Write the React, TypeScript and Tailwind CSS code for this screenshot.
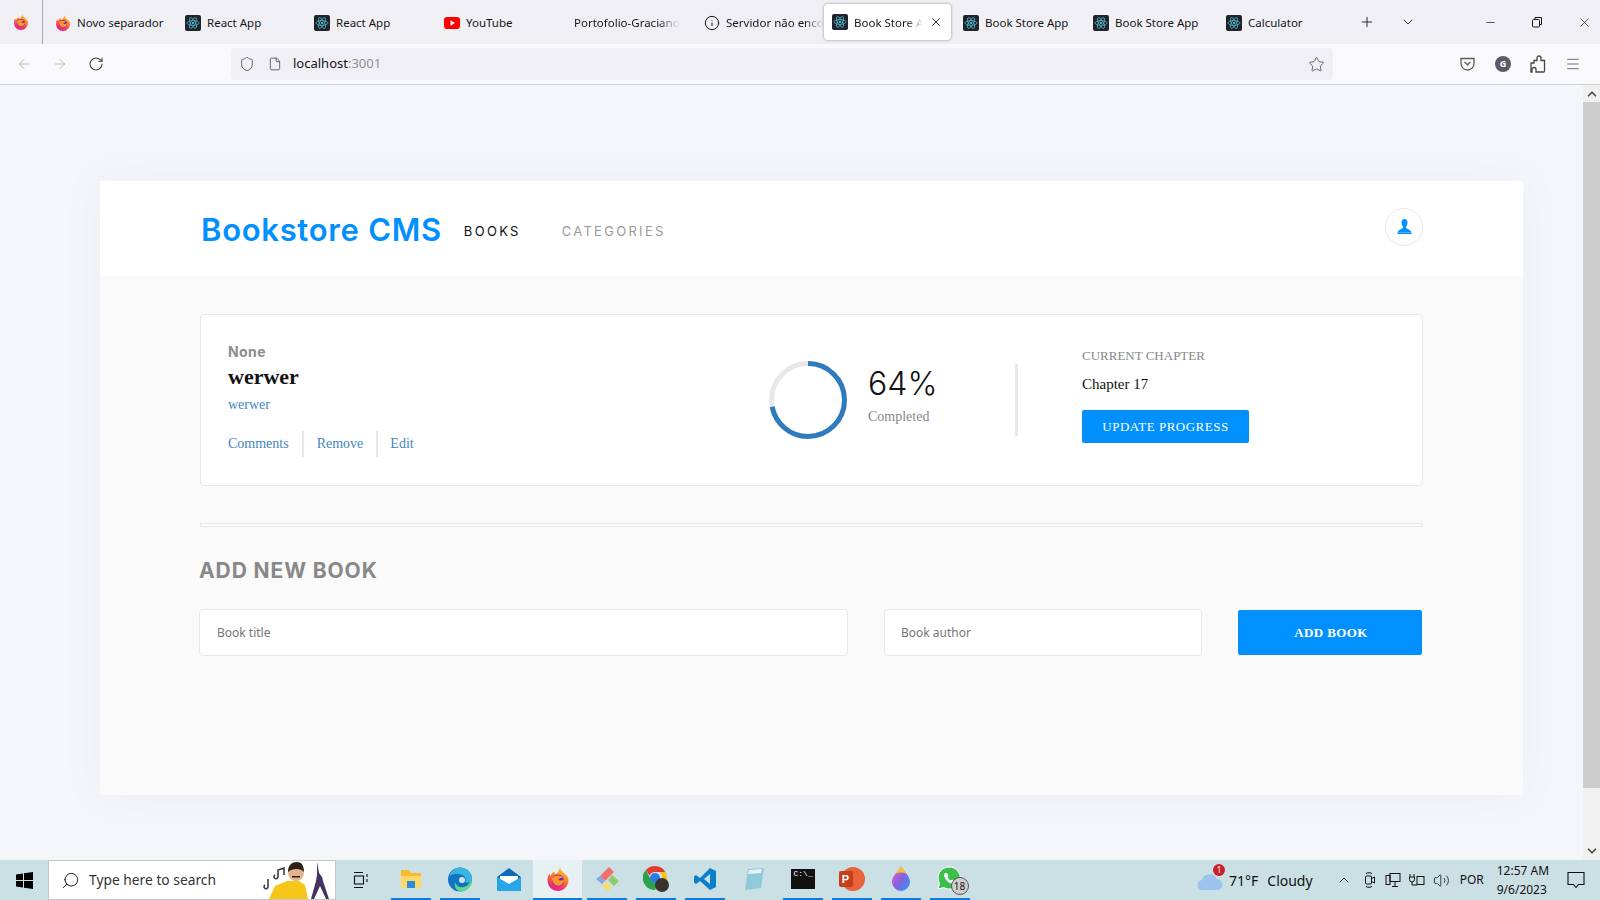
import React from "react";
import {
  ArrowLeft,
  ArrowRight,
  RotateCw,
  Shield,
  File,
  Star,
  ChevronDown,
  ChevronUp,
  Plus,
  X,
  Minus,
  Menu,
  Info,
  Search,
  Volume2,
} from "lucide-react";

const FirefoxIcon = ({ size = 16 }: { size?: number }) => (
  <svg width={size} height={size} viewBox="0 0 32 32" className="shrink-0">
    <defs>
      <linearGradient id="ffBody" x1="0.7" y1="0" x2="0.3" y2="1">
        <stop offset="0" stopColor="#ffd02e" />
        <stop offset="0.45" stopColor="#ff7a2c" />
        <stop offset="0.85" stopColor="#f0257c" />
      </linearGradient>
    </defs>
    <path
      d="M16 32C7 32 2 25 2 17c0-3 1-6 2.500-8 .3 1.500 1 2.500 2 3 .5-3 2.500-5 4.500-6 0 2 1 3 3 3.500C15 7 18 4 19 0c0 3 2 5 4 7 4 3 7 6 7 11 0 7-6 14-14 14z"
      fill="url(#ffBody)"
    />
    <circle cx="16" cy="18" r="8" fill="#6a2bc4" />
    <path d="M8 15c3-4 10-5 15-1-3 0-6 1-6 3 2 2 5 1 7-1 0 6-4 9-8 9-4 0-8-4-8-10z" fill="#ff9326" />
  </svg>
);

const ReactIcon = () => (
  <svg width="16" height="16" viewBox="0 0 16 16" className="shrink-0">
    <rect width="16" height="16" rx="2" fill="#20232a" />
    <g fill="none" stroke="#4fb3c8" strokeWidth="0.8">
      <ellipse cx="8" cy="8" rx="6" ry="2.400" />
      <ellipse cx="8" cy="8" rx="6" ry="2.400" transform="rotate(60 8 8)" />
      <ellipse cx="8" cy="8" rx="6" ry="2.400" transform="rotate(120 8 8)" />
    </g>
    <circle cx="8" cy="8" r="1.200" fill="#4fb3c8" />
  </svg>
);

const YoutubeIcon = () => (
  <svg width="16" height="16" viewBox="0 0 16 16" className="shrink-0">
    <rect y="2" width="16" height="12" rx="3" fill="#f00" />
    <path d="M6.500 5.300v5.400L11 8z" fill="#fff" />
  </svg>
);

type TabProps = {
  width: string;
  icon?: React.ReactNode;
  label: string;
  fade?: boolean;
  pad?: string;
};

const Tab = ({ width, icon, label, fade, pad = "pl-[16px]" }: TabProps) => (
  <div className={`${width} ${pad} flex h-full shrink-0 items-center gap-[6px] overflow-hidden pt-[1px]`}>
    {icon}
    <span
      className={
        fade
          ? "overflow-hidden whitespace-nowrap bg-gradient-to-r from-[#15141a] from-80% to-transparent bg-clip-text text-transparent"
          : "whitespace-nowrap"
      }
    >
      {label}
    </span>
  </div>
);

const BrowserChrome = () => (
  <div className="shrink-0 font-['Noto_Sans',sans-serif] text-[11.5px] text-[#15141a]">
    <div className="flex h-[44px] items-center bg-[#f0f0f4]">
      <div className="flex h-full w-[43px] shrink-0 items-center justify-center border-r border-[#a8a8a8] pb-[1px]">
        <FirefoxIcon />
      </div>
      <Tab width="w-[129px]" pad="pl-[12px]" icon={<FirefoxIcon />} label="Novo separador" />
      <Tab width="w-[129px]" pad="pl-[13px]" icon={<ReactIcon />} label="React App" />
      <Tab width="w-[130px]" pad="pl-[13px]" icon={<ReactIcon />} label="React App" />
      <Tab width="w-[143px]" pad="pl-[13px]" icon={<YoutubeIcon />} label="YouTube" />
      <Tab width="w-[129px]" pad="pl-[0px]" label="Portofolio-Graciano" fade />
      <Tab
        width="w-[121px]"
        pad="pl-[1px]"
        icon={<Info size={16} strokeWidth={1.5} className="shrink-0" />}
        label="Servidor não encontrado"
        fade
      />
      <div className="flex h-[36px] w-[127px] shrink-0 items-center gap-[6px] overflow-hidden rounded-[4px] bg-white pr-[8px] pl-[8px] shadow-[0_0_3px_rgba(0,0,0,0.4)]">
        <ReactIcon />
        <span className="w-[72px] overflow-hidden whitespace-nowrap bg-gradient-to-r from-[#15141a] from-75% to-transparent bg-clip-text pt-[1px] text-transparent">
          Book Store App
        </span>
        <X size={14} strokeWidth={1.5} className="shrink-0" />
      </div>
      <Tab width="w-[130px]" pad="pl-[12px]" icon={<ReactIcon />} label="Book Store App" />
      <Tab width="w-[130px]" pad="pl-[12px]" icon={<ReactIcon />} label="Book Store App" />
      <Tab width="w-[128px]" pad="pl-[15px]" icon={<ReactIcon />} label="Calculator" />
      <Plus size={16} strokeWidth={1.3} className="ml-[20px] shrink-0" />
      <ChevronDown size={16} strokeWidth={1.3} className="ml-[25px] shrink-0" />
      <div className="ml-[68px] flex items-center gap-[33px]">
        <Minus size={13} strokeWidth={1.3} />
        <svg width="14" height="14" viewBox="0 0 14 14" fill="none" stroke="#15141a" strokeWidth="1">
          <rect x="2.500" y="4.500" width="7" height="7.500" rx="1" />
          <path d="M5 4.500V2.500h6.500v7H9.500" />
        </svg>
        <X size={15} strokeWidth={1.1} />
      </div>
    </div>
    <div className="flex h-[41px] items-start border-b border-[#cfcfd8] bg-[#f9f9fb] pt-[4px]">
      <div className="flex h-[32px] w-[231px] shrink-0 items-center pl-[16px] text-[#b3b3b8]">
        <ArrowLeft size={16} strokeWidth={1.3} />
        <ArrowRight size={16} strokeWidth={1.3} className="ml-[20px]" />
        <RotateCw size={16} strokeWidth={1.6} className="ml-[20px] text-[#45454d]" />
      </div>
      <div className="flex h-[32px] w-[1102px] shrink-0 items-center rounded-[4px] bg-[#f0f0f4] pr-[8px] pl-[8px] text-[#5b5b66]">
        <Shield size={16} strokeWidth={1.4} />
        <File size={14} strokeWidth={1.6} className="ml-[13px]" />
        <span className="ml-[11px] text-[13px] text-[#15141a]">
          localhost<span className="text-[#8f8f96]">:3001</span>
        </span>
        <Star size={17} strokeWidth={1.3} className="ml-auto" />
      </div>
      <div className="flex h-[32px] flex-1 items-center pl-[126px] text-[#5b5b66]">
        <svg width="17" height="16" viewBox="0 0 17 16" fill="none" stroke="#5b5b66" strokeWidth="1.300">
          <path d="M2 2.500h13v5a6.500 6.500 0 0 1-13 0z" />
          <path d="M5.500 6l3 2.800 3-2.800" />
        </svg>
        <div className="ml-[19px] flex h-[16px] w-[16px] items-center justify-center rounded-full bg-[#5b5b66] text-[9px] font-bold text-white">
          G
        </div>
        <svg width="16" height="18" viewBox="0 0 16 18" fill="none" stroke="#45454d" strokeWidth="1.300" className="ml-[19px]">
          <path d="M1 8h3V5.500h3V3a2 2 0 0 1 4 0v2.500h3.500V16a1 1 0 0 1-1 1H6v-2.500a2 2 0 0 0-4 0V17H1z" />
        </svg>
        <Menu size={16} strokeWidth={1.3} className="ml-[19px]" />
      </div>
    </div>
  </div>
);

const UserIcon = () => (
  <svg width="15" height="15" viewBox="0 0 15 15" fill="#0290ff">
    <path d="M7.500 0C5.600 0 4.500 1.300 4.500 3.400c0 1.700.6 3.100 1.400 4v1.700C4.600 10.300 1 11.200.5 13.600h14c-.5-2.400-4.100-3.300-5.400-4.500V7.400c.8-.9 1.400-2.300 1.400-4C10.500 1.300 9.400 0 7.500 0z" />
    <rect x="0.500" y="13.600" width="14" height="1.400" />
  </svg>
);

const ProgressRing = () => (
  <svg width="80" height="80" viewBox="0 0 80 80" className="shrink-0 -rotate-90">
    <circle cx="40" cy="40" r="36.500" fill="none" stroke="#e8e8e8" strokeWidth="5" />
    <circle
      cx="40"
      cy="40"
      r="36.500"
      fill="none"
      stroke="#307bbe"
      strokeWidth="5"
      pathLength={100}
      strokeDasharray="72 100"
    />
  </svg>
);

const BookCard = () => (
  <div className="flex h-[172px] w-[1223px] items-center rounded-[4px] border border-[#e8e8e8] bg-white font-['Liberation_Serif',serif]">
    <div className="w-[567px] shrink-0 pl-[27px]">
      <p className="font-['Inter',sans-serif] text-[14px] leading-[18px] font-bold tracking-[0.4px] text-[#8c8c8c]">
        None
      </p>
      <h2 className="mt-[3px] text-[22px] leading-[26px] font-bold text-[#121212]">werwer</h2>
      <p className="mt-[6px] text-[14px] leading-[18px] text-[#4386bf]">werwer</p>
      <ul className="mt-[16px] flex items-center pt-[1px] text-[14px] text-[#4386bf]">
        <li className="border-r-2 border-[#e8e8e8] pr-[13px] leading-[26px]">Comments</li>
        <li className="border-r-2 border-[#e8e8e8] px-[13px] leading-[26px]">Remove</li>
        <li className="pl-[12px] leading-[26px]">Edit</li>
      </ul>
    </div>
    <div className="flex w-[247px] shrink-0 items-center">
      <ProgressRing />
      <div className="mb-[8px] ml-[20px]">
        <p className="font-['Inter',sans-serif] text-[32px] leading-[36px] font-light text-[#121212]">64%</p>
        <p className="mt-[6px] text-[14px] leading-[18px] text-[#888]">Completed</p>
      </div>
    </div>
    <div className="h-[72px] w-[3px] shrink-0 bg-[#e8e8e8]" />
    <div className="mb-[9px] ml-[64px]">
      <p className="text-[13px] leading-[16px] text-[#888]">CURRENT CHAPTER</p>
      <p className="mt-[10px] text-[15px] leading-[20px] text-[#121212]">Chapter 17</p>
      <button className="mt-[16px] h-[33px] w-[167px] rounded-[2px] bg-[#0290ff] text-[13px] tracking-[0.5px] text-white">
        UPDATE PROGRESS
      </button>
    </div>
  </div>
);

const AddBook = () => (
  <div>
    <h3 className="ml-[-1px] font-['Inter',sans-serif] text-[21px] leading-[24px] font-bold tracking-[0.9px] text-[#888]">
      ADD NEW BOOK
    </h3>
    <form className="mt-[26px] ml-[-1px] flex items-center font-['Noto_Sans',sans-serif] text-[12px]">
      <input
        placeholder="Book title"
        className="h-[47px] w-[649px] rounded-[4px] border border-[#e8e8e8] bg-white pl-[17px] placeholder:text-[#757575]"
      />
      <input
        placeholder="Book author"
        className="ml-[36px] h-[47px] w-[318px] rounded-[4px] border border-[#e8e8e8] bg-white pl-[16px] placeholder:text-[#757575]"
      />
      <button
        type="button"
        className="ml-[36px] h-[45px] w-[184px] rounded-[2px] bg-[#0290ff] pl-[2px] font-['Liberation_Serif',serif] text-[13px] font-bold tracking-[0.4px] text-white"
      >
        ADD BOOK
      </button>
    </form>
  </div>
);

const Scrollbar = () => (
  <div className="flex w-[17px] shrink-0 flex-col items-center bg-[#f0f0f0] text-[#505050]">
    <ChevronUp size={14} strokeWidth={3} className="mt-[2px]" />
    <div className="mt-[1px] h-[686px] w-full bg-[#cdcdcd]" />
    <ChevronDown size={14} strokeWidth={3} className="mt-auto mb-[2px]" />
  </div>
);

const taskIcons: { node: React.ReactNode; running?: boolean; active?: boolean }[] = [
  {
    running: true,
    node: (
      <svg width="22" height="20" viewBox="0 0 22 20">
        <path d="M1 1h8l2 3h10v15H1z" fill="#f7b92e" />
        <path d="M1 7h20v12H1z" fill="#ffd766" />
        <rect x="7" y="12" width="8" height="7" fill="#2a8bd8" />
      </svg>
    ),
  },
  {
    running: true,
    node: (
      <svg width="24" height="25" viewBox="0 0 24 25">
        <circle cx="12" cy="12.500" r="12" fill="#1472c4" />
        <path d="M1 10C3 3 8 .5 12 .5c7 0 12 5 12 11 0 4-4 5-7 3.500 1-2 1-4-1-6-4-3-12-3-15 1z" fill="#36b5e0" />
        <path d="M24 13c0 3-1 6-3 8-3 3-7 4-10 3-3-1-5-5-4-9 1 4 5 6 9 5 4-1 4-3 8-7z" fill="#5fd78f" />
        <circle cx="14" cy="13" r="3" fill="#cbe0e5" />
      </svg>
    ),
  },
  {
    node: (
      <svg width="24" height="23" viewBox="0 0 24 23">
        <path d="M12 0l12 9v14H0V9z" fill="#0f6cbd" />
        <path d="M3 8h18v15H3z" fill="#ffffff" />
        <path d="M0 9l12 7 12-7v14H0z" fill="#29a5ea" />
      </svg>
    ),
  },
  { active: true, running: true, node: <FirefoxIcon size={24} /> },
  {
    running: true,
    node: (
      <svg width="24" height="24" viewBox="0 0 24 24">
        <path d="M14 0l5 5-9 9-5-5z" fill="#f0716b" />
        <path d="M5 9l5 5-3 3-6-5z" fill="#7ea8e8" />
        <path d="M17 8l7 6-5 5-6-6z" fill="#8ecb6a" />
        <path d="M11 15l6 5-4 4-6-5z" fill="#f6da6a" />
      </svg>
    ),
  },
  {
    running: true,
    node: (
      <div className="relative h-[26px] w-[26px]">
        <svg width="24" height="24" viewBox="0 0 24 24">
          <path d="M12 0a12 12 0 0 1 10.400 6H12a6 6 0 0 0-5.600 3.500L2.900 4A12 12 0 0 1 12 0z" fill="#e33b2e" />
          <path d="M22.400 6A12 12 0 0 1 12 24l5-8.500a6 6 0 0 0 0-9.500z" fill="#fbc116" />
          <path d="M2.900 4L7 12a6 6 0 0 0 8 4.500L12 24A12 12 0 0 1 2.900 4z" fill="#2ba24c" />
          <circle cx="12" cy="12" r="5" fill="#2a7de1" />
        </svg>
        <div className="absolute right-0 bottom-0 h-[14px] w-[14px] rounded-full bg-[#3a3230]" />
      </div>
    ),
  },
  {
    running: true,
    node: (
      <svg width="24" height="24" viewBox="0 0 24 24">
        <path d="M17 1l6 3v16l-6 3-10-9-4 3-2-1.500V9.500L3 8l4 3zm0 6l-6 5 6 5z" fill="#0b7fcc" />
      </svg>
    ),
  },
  {
    node: (
      <svg width="24" height="24" viewBox="0 0 24 24">
        <path d="M6 2l16-1-3 20-16 2z" fill="#8fc9da" />
        <path d="M7 3l13-1-1 4-13 1z" fill="#e6f2f5" />
      </svg>
    ),
  },
  {
    running: true,
    node: (
      <div className="h-[20px] w-[24px] bg-[#111] pl-[3px] font-['Liberation_Mono',monospace] text-[8px] leading-[10px] text-white">
        C:\_
      </div>
    ),
  },
  {
    running: true,
    node: (
      <div className="relative h-[24px] w-[26px]">
        <div className="absolute top-0 right-0 h-[24px] w-[24px] rounded-full bg-[#e8623c]" />
        <div className="absolute top-[4px] left-0 flex h-[16px] w-[14px] items-center justify-center rounded-[2px] bg-[#c43e1c] font-['Liberation_Sans',sans-serif] text-[11px] font-bold text-white">
          P
        </div>
      </div>
    ),
  },
  {
    running: true,
    node: (
      <svg width="20" height="26" viewBox="0 0 20 26">
        <defs>
          <linearGradient id="paintDrop" x1="0" y1="0" x2="1" y2="1">
            <stop offset="0" stopColor="#f06ac0" />
            <stop offset="0.5" stopColor="#8a5fe0" />
            <stop offset="1" stopColor="#2a9be8" />
          </linearGradient>
        </defs>
        <path d="M10 0c1 4 9 9 9 16a9 9 0 0 1-18 0C1 9 9 4 10 0z" fill="url(#paintDrop)" />
        <path d="M10 0c1 3 4 5 5.500 8-3-2-8-2-11 0C6 5 9 3 10 0z" fill="#fbc02d" />
      </svg>
    ),
  },
  {
    running: true,
    node: (
      <div className="relative h-[26px] w-[26px]">
        <svg width="24" height="24" viewBox="0 0 24 24">
          <path d="M12 1a11 11 0 0 0-9.500 16.500L1 23l5.700-1.500A11 11 0 1 0 12 1z" fill="#3bc14a" stroke="#fff" strokeWidth="1" />
          <path d="M8 7c-1 1-1.500 3 .5 6s5 4.500 6.500 4.500 3-1.500 2.500-2.500l-2.500-1.500-1 1c-1.500-.5-3-2-3.500-3.500l1-1L10 7z" fill="#fff" />
        </svg>
        <div className="absolute -right-[6px] -bottom-[3px] flex h-[18px] w-[18px] items-center justify-center rounded-full border border-[#555] bg-[#cfcfcf] text-[10px] text-[#111]">
          18
        </div>
      </div>
    ),
  },
];

const Tray = () => (
  <div className="flex h-full flex-1 items-center">
    <div className="relative ml-[223px] h-[20px] w-[26px] shrink-0">
      <svg width="26" height="18" viewBox="0 0 26 18" className="absolute bottom-0 left-0">
        <path d="M6 18a5 5 0 0 1-1-10 8 8 0 0 1 15-1 5.500 5.500 0 0 1 0 11z" fill="#9cc3ee" />
      </svg>
      <div className="absolute -top-[6px] right-[-2px] flex h-[12px] w-[12px] items-center justify-center rounded-full bg-[#c8202b] text-[8px] text-white">
        1
      </div>
    </div>
    <span className="ml-[6px] text-[14px] whitespace-nowrap">71°F</span>
    <span className="ml-[9px] text-[14px] whitespace-nowrap">Cloudy</span>
    <ChevronUp size={16} strokeWidth={1.3} className="ml-[23px] shrink-0" />
    <svg width="12" height="18" viewBox="0 0 12 18" fill="none" stroke="#111" strokeWidth="1" className="ml-[12px] shrink-0">
      <rect x="1.500" y="5" width="6" height="8" rx="1" />
      <path d="M7.500 7.500l3-1.500v6l-3-1.500M2 2.500c2-1 4-1 6 0M2 15.500c2 1 4 1 6 0" />
    </svg>
    <svg width="16" height="16" viewBox="0 0 16 16" fill="none" stroke="#111" strokeWidth="1" className="ml-[9px] shrink-0">
      <rect x="5" y="1.500" width="10" height="8" />
      <rect x="1" y="3.500" width="4" height="9" />
      <path d="M10 9.500v5M7 14.500h6" />
    </svg>
    <svg width="16" height="14" viewBox="0 0 16 14" fill="none" stroke="#111" strokeWidth="1" className="ml-[8px] shrink-0">
      <rect x="8" y="3.500" width="7" height="8" />
      <path d="M1 1v3M5 1v3M0.500 4h5v2.500a2.500 2.500 0 0 1-5 0zM3 9v3h5" />
    </svg>
    <Volume2 size={17} strokeWidth={1.1} className="ml-[8px] shrink-0" />
    <span className="ml-[10px] text-[12px]">POR</span>
    <div className="ml-[13px] w-[50px] shrink-0 text-center text-[12px] leading-[19px] whitespace-nowrap">
      <div>12:57 AM</div>
      <div>9/6/2023</div>
    </div>
    <svg width="18" height="18" viewBox="0 0 18 18" fill="none" stroke="#111" strokeWidth="1.100" className="ml-[20px] shrink-0">
      <path d="M1 1.500h16v12h-5.500L9 16.500l-2.500-3H1z" />
    </svg>
  </div>
);

const Taskbar = () => (
  <div className="flex h-[40px] shrink-0 items-center bg-[#cbe0e5] font-['Noto_Sans',sans-serif] text-[#111]">
    <div className="flex h-full w-[48px] shrink-0 items-center justify-center">
      <svg width="17" height="17" viewBox="0 0 17 17" fill="#000">
        <path d="M0 2.400l7-1V8H0zM8 1.200L17 0v8H8zM0 9h7v6.600l-7-1zM8 9h9v8l-9-1.300z" />
      </svg>
    </div>
    <div className="flex h-full w-[288px] shrink-0 items-center overflow-hidden border border-[#c8c8c8] bg-white pl-[12px]">
      <Search size={19} strokeWidth={1.2} className="shrink-0 -scale-x-100" />
      <span className="ml-[9px] text-[13.800px] whitespace-nowrap text-[#333]">Type here to search</span>
      <svg width="72" height="38" viewBox="0 0 72 38" className="ml-auto shrink-0">
        <path d="M2 24a2 2 0 1 0 3 2v-8" fill="none" stroke="#333" strokeWidth="1.500" />
        <path d="M12 14a2 2 0 1 0 3 2V9l6-2v7" fill="none" stroke="#333" strokeWidth="1.500" />
        <path d="M6 38l6-13 12-5h12l6 4 3 14z" fill="#f5c518" />
        <circle cx="33" cy="12" r="8" fill="#e3b48f" />
        <path d="M25 11c0-7 4-10 9-10s7 4 7 10c-3-4-12-4-16 0z" fill="#2b2118" />
        <rect x="29" y="15" width="8" height="1.500" fill="#2b2118" />
        <path d="M54 1l2 11 3 4 1 4 6 18h-3l-6-13-6 13h-3l5-18 1-6z" fill="#43335e" />
      </svg>
    </div>
    <div className="flex h-full w-[50px] shrink-0 items-center justify-center">
      <svg width="16" height="18" viewBox="0 0 16 18" fill="none" stroke="#111" strokeWidth="1.100">
        <path d="M1 1.500h9M1 16.500h9" />
        <rect x="1.500" y="5" width="9" height="8" />
        <path d="M14 3v3M14 8v3" />
      </svg>
    </div>
    {taskIcons.map((item, i) => (
      <div
        key={i}
        className={`flex h-full w-[49px] shrink-0 flex-col items-center ${item.active ? "bg-[#e7f1f3]" : ""}`}
      >
        <div className="flex min-h-0 flex-1 items-center justify-center">{item.node}</div>
        <div
          className={`h-[2px] shrink-0 ${item.active ? "w-full" : "w-[40px]"} ${
            item.running ? "bg-[#0f7bd6]" : ""
          }`}
        />
      </div>
    ))}
    <Tray />
  </div>
);

const App = () => {
  return (
    <div className="flex h-screen w-full flex-col overflow-hidden bg-[#f5f6fa]">
      <BrowserChrome />
      <div className="flex min-h-0 flex-1">
        <main className="flex-1 pt-[96px] pl-[100px]">
          <div className="h-[614px] w-[1423px] bg-[#fafafa] shadow-[0_0_40px_rgba(120,120,140,0.06)]">
            <header className="flex h-[95px] items-center bg-white pr-[100px] pl-[101px]">
              <span className="pt-[4px] font-['Inter',sans-serif] text-[31px] font-semibold tracking-[0.7px] text-[#0290ff]">
                Bookstore CMS
              </span>
              <nav className="mt-[6px] ml-[22px] flex items-center gap-[41px] font-['Inter',sans-serif] text-[13px] tracking-[2.3px]">
                <span className="text-[#121212]">BOOKS</span>
                <span className="text-[#9a9a9a]">CATEGORIES</span>
              </nav>
              <div className="mb-[4px] ml-auto flex h-[38px] w-[38px] items-center justify-center rounded-full border border-[#e8e8e8] bg-white">
                <UserIcon />
              </div>
            </header>
            <section className="pt-[38px] pl-[100px]">
              <BookCard />
              <div className="mt-[37px] h-[4px] w-[1223px] border border-[#e8e8e8]" />
              <div className="mt-[32px]">
                <AddBook />
              </div>
            </section>
          </div>
        </main>
        <Scrollbar />
      </div>
      <Taskbar />
    </div>
  );
};

export default App;
